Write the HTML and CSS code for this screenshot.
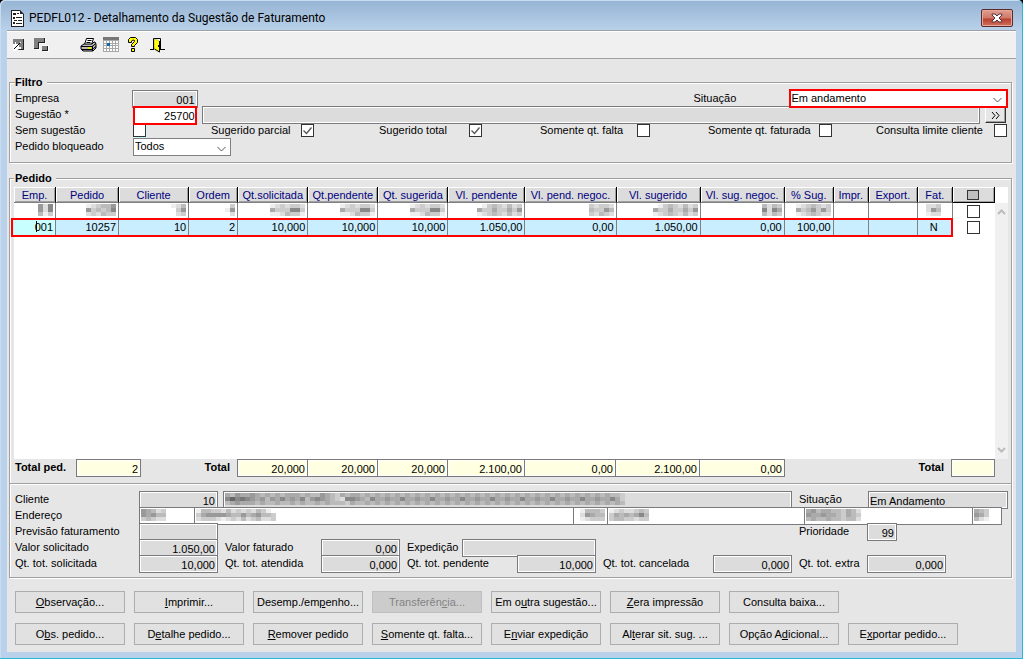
FILE: index.html
```
<!DOCTYPE html>
<html lang="pt-BR">
<head>
    <meta charset="UTF-8">
    <meta name="viewport" content="width=device-width, initial-scale=1.0">
    <title>PEDFL012 - Detalhamento da Sugestão de Faturamento</title>
    <link rel="stylesheet" href="styles.css">
</head>
<body>
    <div class="window">
        <header class="titlebar">
            <svg class="title-icon" width="13" height="17" viewBox="0 0 13 17">
                <path d="M1 1h8l3 3v12H1z" fill="#fff"/>
                <path d="M0 0h9v1H1v15h11V4h1v13H0z" fill="#222"/>
                <path d="M9 0v4h4z" fill="#222"/>
                <path d="M2 3h3v2H2zM6 3h2v1H6zM2 7h2v2H2zM5 7h6v1H5zM3 10h3v1H3zM7 10h4v1H7zM2 12h2v2H2zM5 13h6v1H5z" fill="#222"/>
            </svg>
            <h1>PEDFL012 - Detalhamento da Sugestão de Faturamento</h1>
            <button type="button" class="close" aria-label="Fechar">
                <svg width="12" height="10" viewBox="0 0 12 10">
                    <path d="M1 1h3l2 2 2-2h3v1L8 5l3 3v1H8L6 7 4 9H1V8l3-3-3-3z" fill="#fff" stroke="#5b3038" stroke-width="1"/>
                </svg>
            </button>
        </header>

        <nav class="toolbar">
            <button type="button" aria-label="Restaurar">
                <svg width="14" height="14" viewBox="0 0 14 14">
                    <path d="M0 1h11v11H0z" fill="#808080"/>
                    <path d="M10 1h1v11H5v-1h5z" fill="#222"/>
                    <path d="M0 6h2v-2h6v7H6l-3 2H0z" fill="#fff"/>
                    <path d="M3 5h4v4M7 5l-6 6" fill="none" stroke="#000"/>
                </svg>
            </button>
            <button type="button" aria-label="Navegar" class="tool-cascade">
                <svg width="16" height="14" viewBox="0 0 16 14" shape-rendering="crispEdges">
                    <path d="M1 1h11v5H6v6H1zM8 7h7v7H9z" fill="#fff"/>
                    <path d="M0 0h11v5H5v6H0zM8 8h6v5H8z" fill="#808080"/>
                    <path d="M10 0h1v5H5v6H0v-1h4V4h6zM13 8h1v5H8v-1h5z" fill="#222"/>
                </svg>
            </button>
            <button type="button" aria-label="Imprimir" class="tool-print">
                <svg width="17" height="16" viewBox="0 0 17 16">
                    <path d="M4.500 7.500l2-6h7l-2 6z" fill="#fff" stroke="#000"/>
                    <path d="M7.500 3.500h4M6.500 5.500h4" stroke="#000"/>
                    <path d="M1 9l3-2h8l2-2h1l1 2v4l-3 3H3l-2-2z" fill="#bbb" stroke="#000"/>
                    <path d="M1 9.500h11l4-3M1 12.500h11l4-3M12.500 9v5" stroke="#000" fill="none"/>
                    <path d="M8 11h3" stroke="#ee0" stroke-width="2"/>
                </svg>
            </button>
            <button type="button" aria-label="Calendário" class="tool-calendar">
                <svg width="16" height="15" viewBox="0 0 16 15" shape-rendering="crispEdges">
                    <path d="M0 0h16v15H0z" fill="#a8a8a8"/>
                    <path d="M0 0h16v3H0z" fill="#777"/>
                    <path d="M1 4h2v2H1zM4 4h2v2H4zM7 4h2v2H7zM10 4h2v2h-2zM13 4h2v2h-2zM1 7h2v1H1zM7 7h2v1H7zM10 7h2v1h-2zM13 7h2v1h-2zM1 9h2v2H1zM4 9h2v2H4zM7 9h2v2H7zM10 9h2v2h-2zM13 9h2v2h-2zM1 12h2v2H1zM4 12h2v2H4zM7 12h2v2H7zM10 12h2v2h-2zM13 12h2v2h-2z" fill="#fff"/>
                    <path d="M4 6h3v3H4z" fill="#1667a8"/>
                </svg>
            </button>
            <button type="button" aria-label="Ajuda" class="tool-help">
                <svg width="11" height="15" viewBox="0 0 11 15">
                    <path d="M.5 5.500v-3l2-2h5l2 2v3l-3 3v1h-3v-2l3-3V3.500L5 3 3.500 4v1.500zM3.500 11.500h3v3h-3z" fill="#ff0" stroke="#000"/>
                </svg>
            </button>
            <button type="button" aria-label="Sair" class="tool-exit">
                <svg width="16" height="16" viewBox="0 0 16 16">
                    <path d="M3.500 12V1.500h7V12" fill="#fff" stroke="#000"/>
                    <path d="M4.500 2l5 2v11l-5-3z" fill="#ff0" stroke="#aa0" stroke-width=".5"/>
                    <path d="M9.500 4v11l-5-3" fill="none" stroke="#000"/>
                    <path d="M0 12.500h4M10 12.500h5" stroke="#000"/>
                    <path d="M8.500 8v2" stroke="#000"/>
                </svg>
            </button>
        </nav>

        <main>
            <fieldset class="filter">
                <legend>Filtro</legend>
                <div class="row filter-company">
                    <label for="empresa">Empresa</label>
                    <input id="empresa" class="field num" value="001" readonly>
                    <label for="situacao" class="col-status">Situação</label>
                    <select id="situacao" class="marked">
                        <option>Em andamento</option>
                    </select>
                </div>
                <div class="row filter-suggestion">
                    <label for="sugestao">Sugestão *</label>
                    <input id="sugestao" class="field num marked" value="25700">
                    <input class="field col-desc" aria-label="Descrição da sugestão" readonly>
                    <button type="button" class="more" aria-label="Mais"><svg width="9" height="7" viewBox="0 0 9 7"><path d="M1 0l3 3.500L1 7M5 0l3 3.500L5 7" fill="none" stroke="#000"/></svg></button>
                </div>
                <div class="row filter-checks">
                    <label for="sem">Sem sugestão</label>
                    <input type="checkbox" id="sem" class="focus">
                    <label for="parcial">Sugerido parcial</label>
                    <input type="checkbox" id="parcial" checked>
                    <label for="total">Sugerido total</label>
                    <input type="checkbox" id="total" checked>
                    <label for="falta">Somente qt. falta</label>
                    <input type="checkbox" id="falta">
                    <label for="faturada">Somente qt. faturada</label>
                    <input type="checkbox" id="faturada">
                    <label for="limite">Consulta limite cliente</label>
                    <input type="checkbox" id="limite">
                </div>
                <div class="row filter-blocked">
                    <label for="bloqueado">Pedido bloqueado</label>
                    <select id="bloqueado">
                        <option>Todos</option>
                    </select>
                </div>
            </fieldset>

            <fieldset class="orders">
                <legend>Pedido</legend>
                <div class="grid">
                    <div class="grid-main">
                        <table>
                            <colgroup>
                                <col class="w6"><col class="w9"><col class="w10"><col class="w7"><col class="w10"><col class="w10"><col class="w10"><col class="w11">
                                <col class="w13"><col class="w12"><col class="w12"><col class="w7"><col class="w5"><col class="w7"><col class="w5"><col class="w6">
                            </colgroup>
                            <thead>
                                <tr>
                                    <th>Emp.</th>
                                    <th>Pedido</th>
                                    <th>Cliente</th>
                                    <th>Ordem</th>
                                    <th>Qt.solicitada</th>
                                    <th>Qt.pendente</th>
                                    <th>Qt. sugerida</th>
                                    <th>Vl. pendente</th>
                                    <th>Vl. pend. negoc.</th>
                                    <th>Vl. sugerido</th>
                                    <th>Vl. sug. negoc.</th>
                                    <th>% Sug.</th>
                                    <th>Impr.</th>
                                    <th>Export.</th>
                                    <th>Fat.</th>
                                    <th class="all"><input type="checkbox" aria-label="Marcar todos"></th>
                                </tr>
                            </thead>
                            <tbody>
                                <tr>
                                    <td><span data-mosaic="9d8|9d8|bec"></span></td>
                                    <td><span data-mosaic="edcbb9|9cbcb8|dcdbcc"></span></td>
                                    <td><span data-mosaic="edb|fc9|fdc"></span></td>
                                    <td><span data-mosaic="fc|e9|fd"></span></td>
                                    <td><span data-mosaic="edcdccd|accc88c|eedbcce"></span></td>
                                    <td><span data-mosaic="edcdccd|accc88c|eedbcce"></span></td>
                                    <td><span data-mosaic="edcdccd|accc88c|eedbcce"></span></td>
                                    <td><span data-mosaic="fecbcdbdc|accaccac9|edcbcdbdc"></span></td>
                                    <td><span data-mosaic="cdccd|bcc9b|cdbcd"></span></td>
                                    <td><span data-mosaic="fecbcdbdc|accaccac9|edcbcdbdc"></span></td>
                                    <td><span data-mosaic="bdbc|8d8a|bdbc"></span></td>
                                    <td><span data-mosaic="edcbcdc|acb9c9c|edcbcdd"></span></td>
                                    <td></td>
                                    <td></td>
                                    <td class="center"><span data-mosaic="ddc|d9b|edd"></span></td>
                                    <td class="pick"><input type="checkbox" aria-label="Selecionar pedido"></td>
                                </tr>
                                <tr class="current">
                                    <td class="caret">001</td>
                                    <td>10257</td>
                                    <td>10</td>
                                    <td>2</td>
                                    <td>10,000</td>
                                    <td>10,000</td>
                                    <td>10,000</td>
                                    <td>1.050,00</td>
                                    <td>0,00</td>
                                    <td>1.050,00</td>
                                    <td>0,00</td>
                                    <td>100,00</td>
                                    <td></td>
                                    <td></td>
                                    <td class="center">N</td>
                                    <td class="pick"><input type="checkbox" aria-label="Selecionar pedido 10257"></td>
                                </tr>
                            </tbody>
                        </table>
                        <div class="row-mark"></div>
                    </div>
                    <div class="scrollbar">
                        <svg width="9" height="6" viewBox="0 0 9 6"><path d="M1 5l3.500-3.500L8 5" fill="none" stroke="#bcbcbc" stroke-width="2"/></svg>
                        <svg width="9" height="6" viewBox="0 0 9 6"><path d="M1 1l3.500 3.500L8 1" fill="none" stroke="#bcbcbc" stroke-width="2"/></svg>
                    </div>
                </div>

                <div class="totals">
                    <label for="total-ped">Total ped.</label>
                    <input id="total-ped" class="sum" value="2" readonly>
                    <label for="t-sol" class="right">Total</label>
                    <input id="t-sol" class="sum" value="20,000" readonly>
                    <input class="sum" aria-label="Total qt. pendente" value="20,000" readonly>
                    <input class="sum" aria-label="Total qt. sugerida" value="20,000" readonly>
                    <input class="sum" aria-label="Total vl. pendente" value="2.100,00" readonly>
                    <input class="sum" aria-label="Total vl. pend. negoc." value="0,00" readonly>
                    <input class="sum" aria-label="Total vl. sugerido" value="2.100,00" readonly>
                    <input class="sum" aria-label="Total vl. sug. negoc." value="0,00" readonly>
                    <label for="t-sel" class="right">Total</label>
                    <input id="t-sel" class="sum" readonly>
                </div>

                <div class="details">
                    <div class="row detail-client">
                        <label for="cliente">Cliente</label>
                        <input id="cliente" class="field num" value="10" readonly>
                        <div class="field col-name"><span data-mosaic="ab9aa9abababaaababb9abcabaababababababababababababababababababababababababababbc|868789a9b9a8a9a8b989abcd889ab8aa9aa8aa9aa8aa9aa8aa9aa8aa9aa8aa9aa8aa9aa8aa9aa8ac|ba9aaababbabbababbababbbcabbababababababababababababababababababababababababababc"></span></div>
                        <label for="sit-ped" class="col-label">Situação</label>
                        <input id="sit-ped" class="field" value="Em Andamento" readonly>
                    </div>
                    <div class="row detail-address">
                        <span>Endereço</span>
                        <div class="field plain"><span data-mosaic="9abdc|9a9bb|cbcdd"></span></div>
                        <div class="field plain"><span data-mosaic="ebbccdbdcdcdbcef|ca9999abb9ba9bbc|dcccdedcdbdcbddc"></span></div>
                        <div class="field plain num"><span data-mosaic="ebbbc|d9abb|edccc"></span></div>
                        <div class="field plain"><span data-mosaic="edcddcbc|cababa8b|cbbccdcc"></span></div>
                        <div class="field plain"><span data-mosaic="a9baabbcabd|9aa9aabcabc|babbabbcbbd"></span></div>
                        <div class="field plain"><span data-mosaic="abc|9ac|bde"></span></div>
                    </div>
                    <div class="row detail-forecast">
                        <label for="previsao">Previsão faturamento</label>
                        <input id="previsao" class="field" readonly>
                        <label for="prioridade" class="col-label">Prioridade</label>
                        <input id="prioridade" class="field num" value="99" readonly>
                    </div>
                    <div class="row detail-values">
                        <label for="valor-sol">Valor solicitado</label>
                        <input id="valor-sol" class="field num" value="1.050,00" readonly>
                        <label for="valor-fat" class="col-label">Valor faturado</label>
                        <input id="valor-fat" class="field num" value="0,00" readonly>
                        <label for="expedicao" class="col-label">Expedição</label>
                        <input id="expedicao" class="field" readonly>
                    </div>
                    <div class="row detail-amounts">
                        <label for="qt-sol">Qt. tot. solicitada</label>
                        <input id="qt-sol" class="field num" value="10,000" readonly>
                        <label for="qt-ate" class="col-label">Qt. tot. atendida</label>
                        <input id="qt-ate" class="field num" value="0,000" readonly>
                        <label for="qt-pen" class="col-label">Qt. tot. pendente</label>
                        <input id="qt-pen" class="field num" value="10,000" readonly>
                        <label for="qt-can" class="col-label">Qt. tot. cancelada</label>
                        <input id="qt-can" class="field num" value="0,000" readonly>
                        <label for="qt-ext" class="col-label">Qt. tot. extra</label>
                        <input id="qt-ext" class="field num" value="0,000" readonly>
                    </div>
                </div>
            </fieldset>

            <div class="actions">
                <button type="button"><u>O</u>bservação...</button>
                <button type="button"><u>I</u>mprimir...</button>
                <button type="button">Desemp./em<u>p</u>enho...</button>
                <button type="button" disabled>Transferên<u>c</u>ia...</button>
                <button type="button">Em o<u>u</u>tra sugestão...</button>
                <button type="button"><u>Z</u>era impressão</button>
                <button type="button">Consulta baixa...</button>
            </div>
            <div class="actions">
                <button type="button">O<u>b</u>s. pedido...</button>
                <button type="button">D<u>e</u>talhe pedido...</button>
                <button type="button"><u>R</u>emover pedido</button>
                <button type="button"><u>S</u>omente qt. falta...</button>
                <button type="button">E<u>n</u>viar expedição</button>
                <button type="button">Al<u>t</u>erar sit. sug. ...</button>
                <button type="button">Opção A<u>d</u>icional...</button>
                <button type="button">E<u>x</u>portar pedido...</button>
            </div>
        </main>
    </div>

    <script src="script.js"></script>
</body>
</html>
```

FILE: styles.css
```
* {
    box-sizing: border-box;
}
body {
    margin: 0;
    font-family: "Liberation Sans", Arial, sans-serif;
    font-size: 11px;
    line-height: 14px;
    color: #000;
    background-color: #000;
}
input, select, button {
    font: inherit;
    color: inherit;
    margin: 0;
    border-radius: 0;
}
.window {
    display: flex;
    flex-direction: column;
    min-height: 100vh;
    padding: 0 6px 6px 7px;
    background: linear-gradient(#95b3d3, #b9d1ea 30px, #b9d1ea);
    border: solid #2bb8d4;
    border-width: 0 1px 1px 0;
    border-radius: 5px 5px 0 0;
    box-shadow: inset 1px 1px #c8dcf0;
}

/* title bar */
.titlebar {
    display: flex;
    align-items: center;
    height: 30px;
    padding: 6px 3px 0 4px;
}
.titlebar h1 {
    flex: 1;
    margin: 0 0 0 5px;
    font: 12px/16px Roboto, sans-serif;
}
.close {
    display: flex;
    align-items: center;
    justify-content: center;
    width: 32px;
    height: 18px;
    padding: 0;
    border: 1px solid #5c2a2a;
    border-radius: 2px;
    background: linear-gradient(#e0a090, #cf7768 8px, #b8402f 9px, #d0705c);
    box-shadow: inset 0 0 0 1px #e3a79c;
}

/* toolbar */
.toolbar {
    display: flex;
    align-items: center;
    height: 29px;
    padding: 0 6px;
    background-color: #f0f0f0;
    border-top: 1px solid #a0a0a0;
    border-bottom: 1px solid #a0a0a0;
    box-shadow: inset 0 1px #fff;
}
.toolbar button {
    display: flex;
    padding: 0;
    border: none;
    background: none;
}
.toolbar .tool-cascade {
    margin-left: 7px;
}
.toolbar .tool-print {
    margin-left: 30px;
}
.toolbar .tool-calendar {
    margin-left: 6px;
}
.toolbar .tool-help {
    margin-left: 9px;
}
.toolbar .tool-exit {
    margin-left: 11px;
}

main {
    flex: 1;
    display: flex;
    flex-direction: column;
    padding: 16px 4px 5px 2px;
    background-color: #e6e6e6;
}
fieldset {
    min-width: 0;
    margin: 0 0 8px;
    padding: 1px 3px 8px 5px;
    border: 1px solid #a0a0a0;
    box-shadow: inset 1px 1px #fff, 1px 1px #fff;
}
legend {
    padding: 0 4px 0 0;
    background-color: #e6e6e6;
    font-weight: bold;
}

/* rows of labels and fields */
.row {
    display: grid;
    align-items: start;
    height: 16px;
}
.row label, .row > span {
    padding-top: 1px;
    white-space: nowrap;
}
.field {
    width: 100%;
    min-width: 0;
    height: 18px;
    padding: 1px 2px 0 1px;
    border: 1px solid #7a7a7e;
    background-color: #dcdcdc;
    box-shadow: inset 0 0 0 1px #fff;
}
.field.num {
    text-align: right;
}
.field.plain {
    background-color: #fff;
}
select {
    appearance: none;
    width: 100%;
    height: 18px;
    padding: 0 1px 2px;
    border: 1px solid #808080;
    background: #fff url("data:image/svg+xml,%3Csvg xmlns='http://www.w3.org/2000/svg' width='9' height='6'%3E%3Cpath d='M.5 1l4 4 4-4' fill='none' stroke='%23555'/%3E%3C/svg%3E") no-repeat right 4px bottom 3px;
}
.marked, .field.marked {
    height: 19px;
    border: 2px solid #f00;
    background-color: #fff;
    z-index: 1;
}
.filter-company {
    margin-top: -1px;
    padding-top: 1px;
    height: 17px;
}
select.marked {
    padding: 0 0 3px;
    margin-top: -1px;
}
.field.marked {
    padding: 0;
}
input[type="checkbox"] {
    appearance: none;
    display: block;
    width: 13px;
    height: 13px;
    border: 1px solid #333;
    background: #fff no-repeat center;
}
input[type="checkbox"]:checked {
    background-image: url("data:image/svg+xml,%3Csvg xmlns='http://www.w3.org/2000/svg' width='11' height='11'%3E%3Cpath d='M1.500 5.500l3 3 5-6' fill='none' stroke='%23555' stroke-width='1.300'/%3E%3C/svg%3E");
}
.row input[type="checkbox"] {
    margin-top: 2px;
}
input.focus {
    box-shadow: 1px 1px #c8f8ff;
}

.filter-company {
    grid-template-columns: 117fr 66fr 593fr 219fr;
}
.col-status {
    justify-self: end;
    width: 96px;
}
.filter-suggestion {
    grid-template-columns: 118fr 64fr 5fr 780fr 5fr 21fr 2fr;
}
.col-desc {
    grid-column: 4;
}
.more {
    grid-column: 6;
    display: flex;
    align-items: center;
    justify-content: center;
    height: 16px;
    margin-top: 1px;
    padding: 0;
    border: 1px solid;
    border-color: #fff #333 #333 #fff;
    background-color: #e6e6e6;
    box-shadow: inset -1px -1px #a0a0a0;
}
.filter-checks {
    grid-template-columns: 118fr 78fr 90fr 78fr 90fr 71fr 97fr 71fr 111fr 57fr 118fr 14fr;
}
.filter-blocked {
    grid-template-columns: 118fr 98fr 777fr;
}

/* orders table */
.orders {
    margin-bottom: 13px;
    padding: 2px 3px 6px 4px;
}
.orders legend {
    padding-left: 1px;
}
.grid {
    display: flex;
    min-height: calc(100vh - 387px);
    background-color: #fff;
}
.grid-main {
    flex: 1;
    position: relative;
}
.scrollbar {
    display: flex;
    flex-direction: column;
    justify-content: space-between;
    align-items: center;
    width: 13px;
    margin-top: 16px;
    padding: 6px 0;
    background-color: #f0f0f0;
}
table {
    width: 100%;
    table-layout: fixed;
    border-collapse: separate;
    border-spacing: 0;
}
.w5 { width: 35px; }
.w6 { width: 42px; }
.w7 { width: 49px; }
.w9 { width: 63px; }
.w10 { width: 70px; }
.w11 { width: 77px; }
.w12 { width: 84px; }
.w13 { width: 91px; }
th {
    height: 16px;
    padding: 0;
    background-color: #dcdcdc;
    border-right: 1px solid #000;
    border-bottom: 1px solid #808080;
    box-shadow: inset 1px 1px #fff, inset -1px -1px #a0a0a0;
    color: #000080;
    font-weight: normal;
    white-space: nowrap;
}
th.all {
    border-bottom-color: #000;
}
th.all input {
    width: 12px;
    height: 10px;
    margin: 0 auto;
    background-color: #c0c0c0;
}
td {
    height: 16px;
    padding: 0 2px 0 0;
    border-right: 1px solid #808080;
    text-align: right;
    line-height: 14px;
}
td.center {
    text-align: center;
}
td.pick {
    padding: 0 0 0 14px;
    border: none;
}
.current td {
    background-color: #c8eeff;
}
.current td.caret {
    background: linear-gradient(#000, #000) no-repeat 22px 2px / 1px 11px #c8ffff;
}
.current td.pick {
    background-color: #fff;
}
.row-mark {
    position: absolute;
    top: 31px;
    left: -3px;
    right: 42px;
    height: 19px;
    border: 2px solid #f00;
}

.totals {
    display: grid;
    grid-template-columns: 62fr 65fr 96fr 71fr 70fr 70fr 77fr 91fr 84fr 85fr 166fr 44fr 13fr;
    height: 24px;
    font-weight: bold;
    white-space: nowrap;
}
.totals label {
    padding: 1px 0 0 1px;
}
.totals .right {
    padding-right: 7px;
    text-align: right;
}
.sum {
    width: 100%;
    min-width: 0;
    height: 18px;
    padding: 1px 2px 0 1px;
    border: 1px solid #7a7a7e;
    background-color: #ffffe1;
    box-shadow: inset 0 0 0 1px #fff;
    text-align: right;
    font-weight: normal;
}
.sum + .sum {
    border-left: none;
}

/* details of the selected order */
.details {
    margin: 0 -3px 0 -4px;
    padding: 7px 3px 0 5px;
    border-top: 1px solid #a0a0a0;
    box-shadow: inset 0 1px #fff;
}
.col-label {
    padding-left: 7px;
}
.detail-client {
    grid-template-columns: 124fr 79fr 574fr 76fr 140fr;
}
.col-name {
    justify-self: end;
    width: calc(100% - 5px);
}
.detail-address {
    grid-template-columns: 124fr 56fr 379fr 34fr 197fr 168fr 29fr 6fr;
}
.detail-address .field + .field {
    border-left: none;
}
.detail-forecast {
    grid-template-columns: 124fr 79fr 574fr 75fr 30fr 111fr;
}
.detail-forecast .col-label {
    grid-column: 4;
}
.detail-values {
    grid-template-columns: 124fr 79fr 103fr 79fr 62fr 134fr 412fr;
}
.detail-amounts {
    grid-template-columns: 124fr 79fr 103fr 79fr 117fr 79fr 117fr 79fr 75fr 79fr 62fr;
}

.actions {
    display: flex;
    gap: 9px;
    padding-left: 6px;
}
.actions + .actions {
    margin-top: 10px;
}
.actions button {
    width: 110px;
    height: 22px;
    padding: 0;
    border: 1px solid #adadad;
    background-color: #e1e1e1;
    white-space: nowrap;
}
.actions button:disabled {
    background-color: #ccc;
    border-color: #bfbfbf;
    color: #838383;
}

.mosaic {
    display: inline-block;
    vertical-align: top;
}
```

FILE: script.js
```
// Draws masked values: one hex digit per grey cell, rows separated by "|"
const CELL_W = 5;
const CELL_H = 4;
const NS = 'http://www.w3.org/2000/svg';

document.querySelectorAll('[data-mosaic]').forEach((el) => {
    const rows = el.dataset.mosaic.split('|');
    const svg = document.createElementNS(NS, 'svg');
    svg.setAttribute('class', 'mosaic');
    svg.setAttribute('width', rows[0].length * CELL_W);
    svg.setAttribute('height', rows.length * CELL_H);
    svg.setAttribute('shape-rendering', 'crispEdges');

    rows.forEach((row, y) => {
        [...row].forEach((shade, x) => {
            const rect = document.createElementNS(NS, 'rect');
            rect.setAttribute('x', x * CELL_W);
            rect.setAttribute('y', y * CELL_H);
            rect.setAttribute('width', CELL_W);
            rect.setAttribute('height', CELL_H);
            rect.setAttribute('fill', '#' + shade.repeat(3));
            svg.appendChild(rect);
        });
    });
    el.appendChild(svg);
});
```
